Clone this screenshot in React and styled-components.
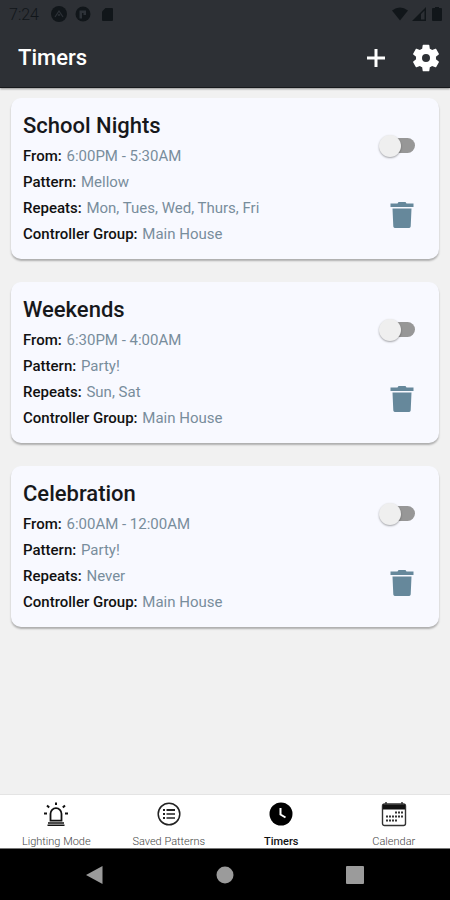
import React, { useState } from "react";
import styled, { createGlobalStyle } from "styled-components";

const initialTimers = [
  {
    id: 1,
    name: "School Nights",
    from: "6:00PM - 5:30AM",
    pattern: "Mellow",
    repeats: "Mon, Tues, Wed, Thurs, Fri",
    group: "Main House",
  },
  {
    id: 2,
    name: "Weekends",
    from: "6:30PM - 4:00AM",
    pattern: "Party!",
    repeats: "Sun, Sat",
    group: "Main House",
  },
  {
    id: 3,
    name: "Celebration",
    from: "6:00AM - 12:00AM",
    pattern: "Party!",
    repeats: "Never",
    group: "Main House",
  },
];

const tabs = [
  { name: "Lighting Mode", Icon: SirenIcon },
  { name: "Saved Patterns", Icon: ListIcon },
  { name: "Timers", Icon: ClockIcon },
  { name: "Calendar", Icon: CalendarIcon },
];

export default function App() {
  const [timers, setTimers] = useState(initialTimers);
  const [active, setActive] = useState("Timers");

  const removeTimer = (id) => setTimers(timers.filter((t) => t.id !== id));

  return (
    <Screen>
      <GlobalStyle />
      <Header>
        <StatusBar />
        <Toolbar>
          <Title>Timers</Title>
          <IconButton aria-label="Add timer">
            <PlusIcon />
          </IconButton>
          <IconButton aria-label="Settings">
            <GearIcon />
          </IconButton>
        </Toolbar>
      </Header>
      <List>
        {timers.map((timer) => (
          <TimerCard key={timer.id} timer={timer} onDelete={removeTimer} />
        ))}
      </List>
      <TabBar>
        {tabs.map(({ name, Icon }) => (
          <Tab
            key={name}
            href="#"
            $active={name === active}
            onClick={() => setActive(name)}
          >
            <Icon />
            <span>{name}</span>
          </Tab>
        ))}
      </TabBar>
      <SystemBar>
        <SystemButton aria-label="Back">
          <svg width="18" height="20" viewBox="0 0 18 20">
            <path d="M16.500 1v18L0 10z" />
          </svg>
        </SystemButton>
        <SystemButton aria-label="Home">
          <svg width="18" height="18" viewBox="0 0 18 18">
            <circle cx="9" cy="9" r="8.500" />
          </svg>
        </SystemButton>
        <SystemButton aria-label="Recent apps">
          <svg width="18" height="18" viewBox="0 0 18 18">
            <rect width="18" height="18" rx="1" />
          </svg>
        </SystemButton>
      </SystemBar>
    </Screen>
  );
}

function TimerCard({ timer, onDelete }) {
  return (
    <Card>
      <Details>
        <Name>{timer.name}</Name>
        <Row>
          <b>From:</b> {timer.from}
        </Row>
        <Row>
          <b>Pattern:</b> {timer.pattern}
        </Row>
        <Row>
          <b>Repeats:</b> {timer.repeats}
        </Row>
        <Row>
          <b>Controller Group:</b> {timer.group}
        </Row>
      </Details>
      <Actions>
        <Switch type="checkbox" aria-label={`${timer.name} enabled`} />
        <IconButton
          aria-label={`Delete ${timer.name}`}
          onClick={() => onDelete(timer.id)}
        >
          <TrashIcon />
        </IconButton>
      </Actions>
    </Card>
  );
}

function StatusBar() {
  return (
    <Status>
      <time>7:24</time>
      <svg width="16" height="16" viewBox="0 0 16 16">
        <circle cx="8" cy="8" r="8" fill="#11161a" />
        <path
          d="M4 11l4-6 4 6M7 9.500L8 8.500l1 1"
          fill="none"
          stroke="#2d3238"
          strokeWidth="1.200"
        />
      </svg>
      <svg width="16" height="16" viewBox="0 0 16 16">
        <circle cx="8" cy="8" r="7.500" fill="#11161a" />
        <path d="M4.500 4.500h6.500v4.500H8.500V7H7v5.500H4.500z" fill="#2d3238" />
      </svg>
      <svg width="16" height="16" viewBox="0 0 16 16">
        <path
          d="M6.500 2H13a1 1 0 0 1 1 1v11a1 1 0 0 1-1 1H4a1 1 0 0 1-1-1V5.500z"
          fill="#11161a"
        />
      </svg>
      <Spacer />
      <svg width="16" height="14" viewBox="0 0 16 14">
        <path d="M0 3.500Q8-2.500 16 3.500L8 13.500z" fill="#11161a" />
      </svg>
      <svg width="14" height="14" viewBox="0 0 14 14">
        <path
          d="M0 14L14 0v14zM9 7v5.500h3.500V3.500z"
          fill="#11161a"
          fillRule="evenodd"
        />
      </svg>
      <svg width="14" height="14" viewBox="0 0 14 14">
        <path
          d="M5 0h4v1h2a1 1 0 0 1 1 1v11a1 1 0 0 1-1 1H3a1 1 0 0 1-1-1V2a1 1 0 0 1 1-1h2z"
          fill="#11161a"
        />
      </svg>
    </Status>
  );
}

function PlusIcon() {
  return (
    <svg width="20" height="20" viewBox="0 0 20 20">
      <path d="M10 1v18M1 10h18" stroke="#fff" strokeWidth="3" />
    </svg>
  );
}

function GearIcon() {
  return (
    <svg width="32" height="32" viewBox="0 0 24 24" fill="#fff">
      <path d="M19.430 12.980c.04-.32.07-.64.07-.98s-.03-.66-.07-.98l2.110-1.650c.19-.15.24-.42.12-.64l-2-3.460c-.12-.22-.39-.3-.61-.22l-2.490 1c-.52-.4-1.080-.73-1.690-.98l-.38-2.650C14.460 2.180 14.250 2 14 2h-4c-.25 0-.46.18-.49.42l-.38 2.650c-.61.25-1.170.59-1.690.98l-2.490-1c-.23-.09-.49 0-.61.22l-2 3.460c-.13.22-.07.49.12.64l2.110 1.650c-.04.32-.07.65-.07.98s.03.66.07.98l-2.110 1.650c-.19.15-.24.42-.12.64l2 3.460c.12.22.39.3.61.22l2.490-1c.52.4 1.080.73 1.690.98l.38 2.650c.03.24.24.42.49.42h4c.25 0 .46-.18.49-.42l.38-2.650c.61-.25 1.170-.59 1.690-.98l2.490 1c.23.09.49 0 .61-.22l2-3.460c.12-.22.07-.49-.12-.64zM12 15a3 3 0 1 1 0-6 3 3 0 0 1 0 6z" />
    </svg>
  );
}

function TrashIcon() {
  return (
    <svg width="24" height="28" viewBox="0 0 24 28" fill="#66889b">
      <path d="M8.500 1h7l1 1.500H23.500V6H.5V2.500h7z" />
      <path d="M2.500 7.500h19L20.700 25.500a2 2 0 0 1-2 1.500H5.300a2 2 0 0 1-2-1.500z" />
    </svg>
  );
}

function SirenIcon() {
  return (
    <svg width="26" height="26" viewBox="0 0 26 26" fill="none" stroke="#111">
      <path d="M7.500 19.700v-7a5.500 5.500 0 0 1 11 0v7z" strokeWidth="1.800" />
      <path d="M5 22h16M4.500 24.300h17" strokeWidth="1.400" />
      <path
        d="M13 1.500v2.500M4 4.500l2.200 2M22 4.500l-2.200 2M1 12.500h3M22 12.500h3"
        strokeWidth="2"
      />
    </svg>
  );
}

function ListIcon() {
  return (
    <svg width="26" height="26" viewBox="0 0 26 26" fill="none" stroke="#222">
      <circle cx="13" cy="13" r="10.800" strokeWidth="1.500" />
      <path d="M7 9h2M7 13h2M7 17h2" strokeWidth="2" />
      <path d="M10.500 9H19" strokeWidth="2" />
      <path d="M10.500 13H19M10.500 17H19" strokeWidth="1.500" />
    </svg>
  );
}

function ClockIcon() {
  return (
    <svg width="26" height="26" viewBox="0 0 26 26" fill="none">
      <circle cx="13" cy="13" r="11.500" fill="#000" />
      <path d="M12.500 7v6.500l5 3" stroke="#fff" strokeWidth="2" />
    </svg>
  );
}

function CalendarIcon() {
  return (
    <svg width="26" height="26" viewBox="0 0 26 26" fill="none" stroke="#333">
      <rect x="1.500" y="3" width="23" height="21.500" rx="2" strokeWidth="1.400" />
      <path d="M2 3.500h22v5H2z" fill="#111" stroke="none" />
      <path d="M5 1v3M21 1v3" strokeWidth="1.500" />
      <path
        d="M14 11.500h8M5 15.500h17M5 19.500h12"
        strokeWidth="2"
        strokeDasharray="2 1"
      />
    </svg>
  );
}

const GlobalStyle = createGlobalStyle`
  * {
    box-sizing: border-box;
  }
  body {
    margin: 0;
    background: #f1f1f1;
    font-family: Roboto, "Liberation Sans", sans-serif;
  }
  svg {
    display: block;
  }
`;

const Screen = styled.div`
  display: flex;
  flex-direction: column;
  min-height: 100vh;
`;

const Header = styled.header`
  background: #2d3035;
  border-bottom: 1px solid #17191c;
  box-shadow: 0 1px 2px rgba(0, 0, 0, 0.4);
`;

const Status = styled.div`
  display: flex;
  align-items: center;
  gap: 8px;
  height: 28px;
  padding: 0 6px 0 9px;
  color: #11161a;
  font-size: 16px;
  font-weight: 300;
  time {
    margin-right: 4px;
  }
  svg:nth-of-type(n + 5) {
    margin-left: -4px;
  }
`;

const Spacer = styled.div`
  flex: 1;
`;

const Toolbar = styled.div`
  display: flex;
  align-items: center;
  gap: 24px;
  height: 59px;
  padding: 0 8px 0 18px;
`;

const Title = styled.h1`
  flex: 1;
  margin: 0;
  color: #fff;
  font-size: 22px;
  font-weight: 500;
  line-height: 26px;
`;

const IconButton = styled.button`
  padding: 0;
  border: 0;
  background: none;
  cursor: pointer;
`;

const List = styled.main`
  flex: 1;
  display: flex;
  flex-direction: column;
  gap: 23px;
  padding: 10px 11px;
`;

const Card = styled.section`
  display: flex;
  justify-content: space-between;
  padding: 13px 24px 12px 12px;
  border-radius: 10px;
  background: #f8f9ff;
  box-shadow: 0 2px 2px rgba(0, 0, 0, 0.28);
`;

const Details = styled.div`
  min-width: 0;
`;

const Name = styled.h2`
  margin: 0 0 2px;
  color: #17181b;
  font-size: 22px;
  font-weight: 500;
  line-height: 30px;
`;

const Row = styled.p`
  margin: 0;
  color: #788d9c;
  font-size: 15px;
  line-height: 26px;
  b {
    margin-right: 1px;
    color: #111;
    font-weight: 500;
  }
`;

const Actions = styled.div`
  display: flex;
  flex-direction: column;
  align-items: flex-end;
  gap: 48px;
  padding-top: 27px;
  ${IconButton} {
    margin-right: 1px;
  }
`;

/* the thumb is larger than the track and hangs over its end */
const Switch = styled.input`
  appearance: none;
  display: flex;
  align-items: center;
  width: 30px;
  height: 15px;
  margin: 0;
  background: #979797;
  border-radius: 8px;
  cursor: pointer;
  &::before {
    content: "";
    flex: none;
    width: 22px;
    height: 22px;
    margin: 0 -6px;
    border-radius: 50%;
    background: #efefef;
    box-shadow: 0 1px 2px rgba(0, 0, 0, 0.35);
  }
  &:checked {
    justify-content: flex-end;
  }
`;

const TabBar = styled.nav`
  display: grid;
  grid-template-columns: repeat(4, 1fr);
  height: 54px;
  background: #fff;
  border-top: 1px solid #e4e4e4;
`;

const Tab = styled.a`
  display: flex;
  flex-direction: column;
  align-items: center;
  gap: 8px;
  padding-top: 6px;
  color: ${({ $active }) => ($active ? "#111" : "#444")};
  font-size: 11px;
  font-weight: ${({ $active }) => ($active ? 500 : 300)};
  line-height: 13px;
  text-decoration: none;
`;

const SystemBar = styled.footer`
  display: flex;
  align-items: center;
  justify-content: center;
  gap: 112px;
  height: 52px;
  background: #000;
  border-top: 1px solid #777;
`;

const SystemButton = styled(IconButton)`
  fill: #9b9b9b;
`;
